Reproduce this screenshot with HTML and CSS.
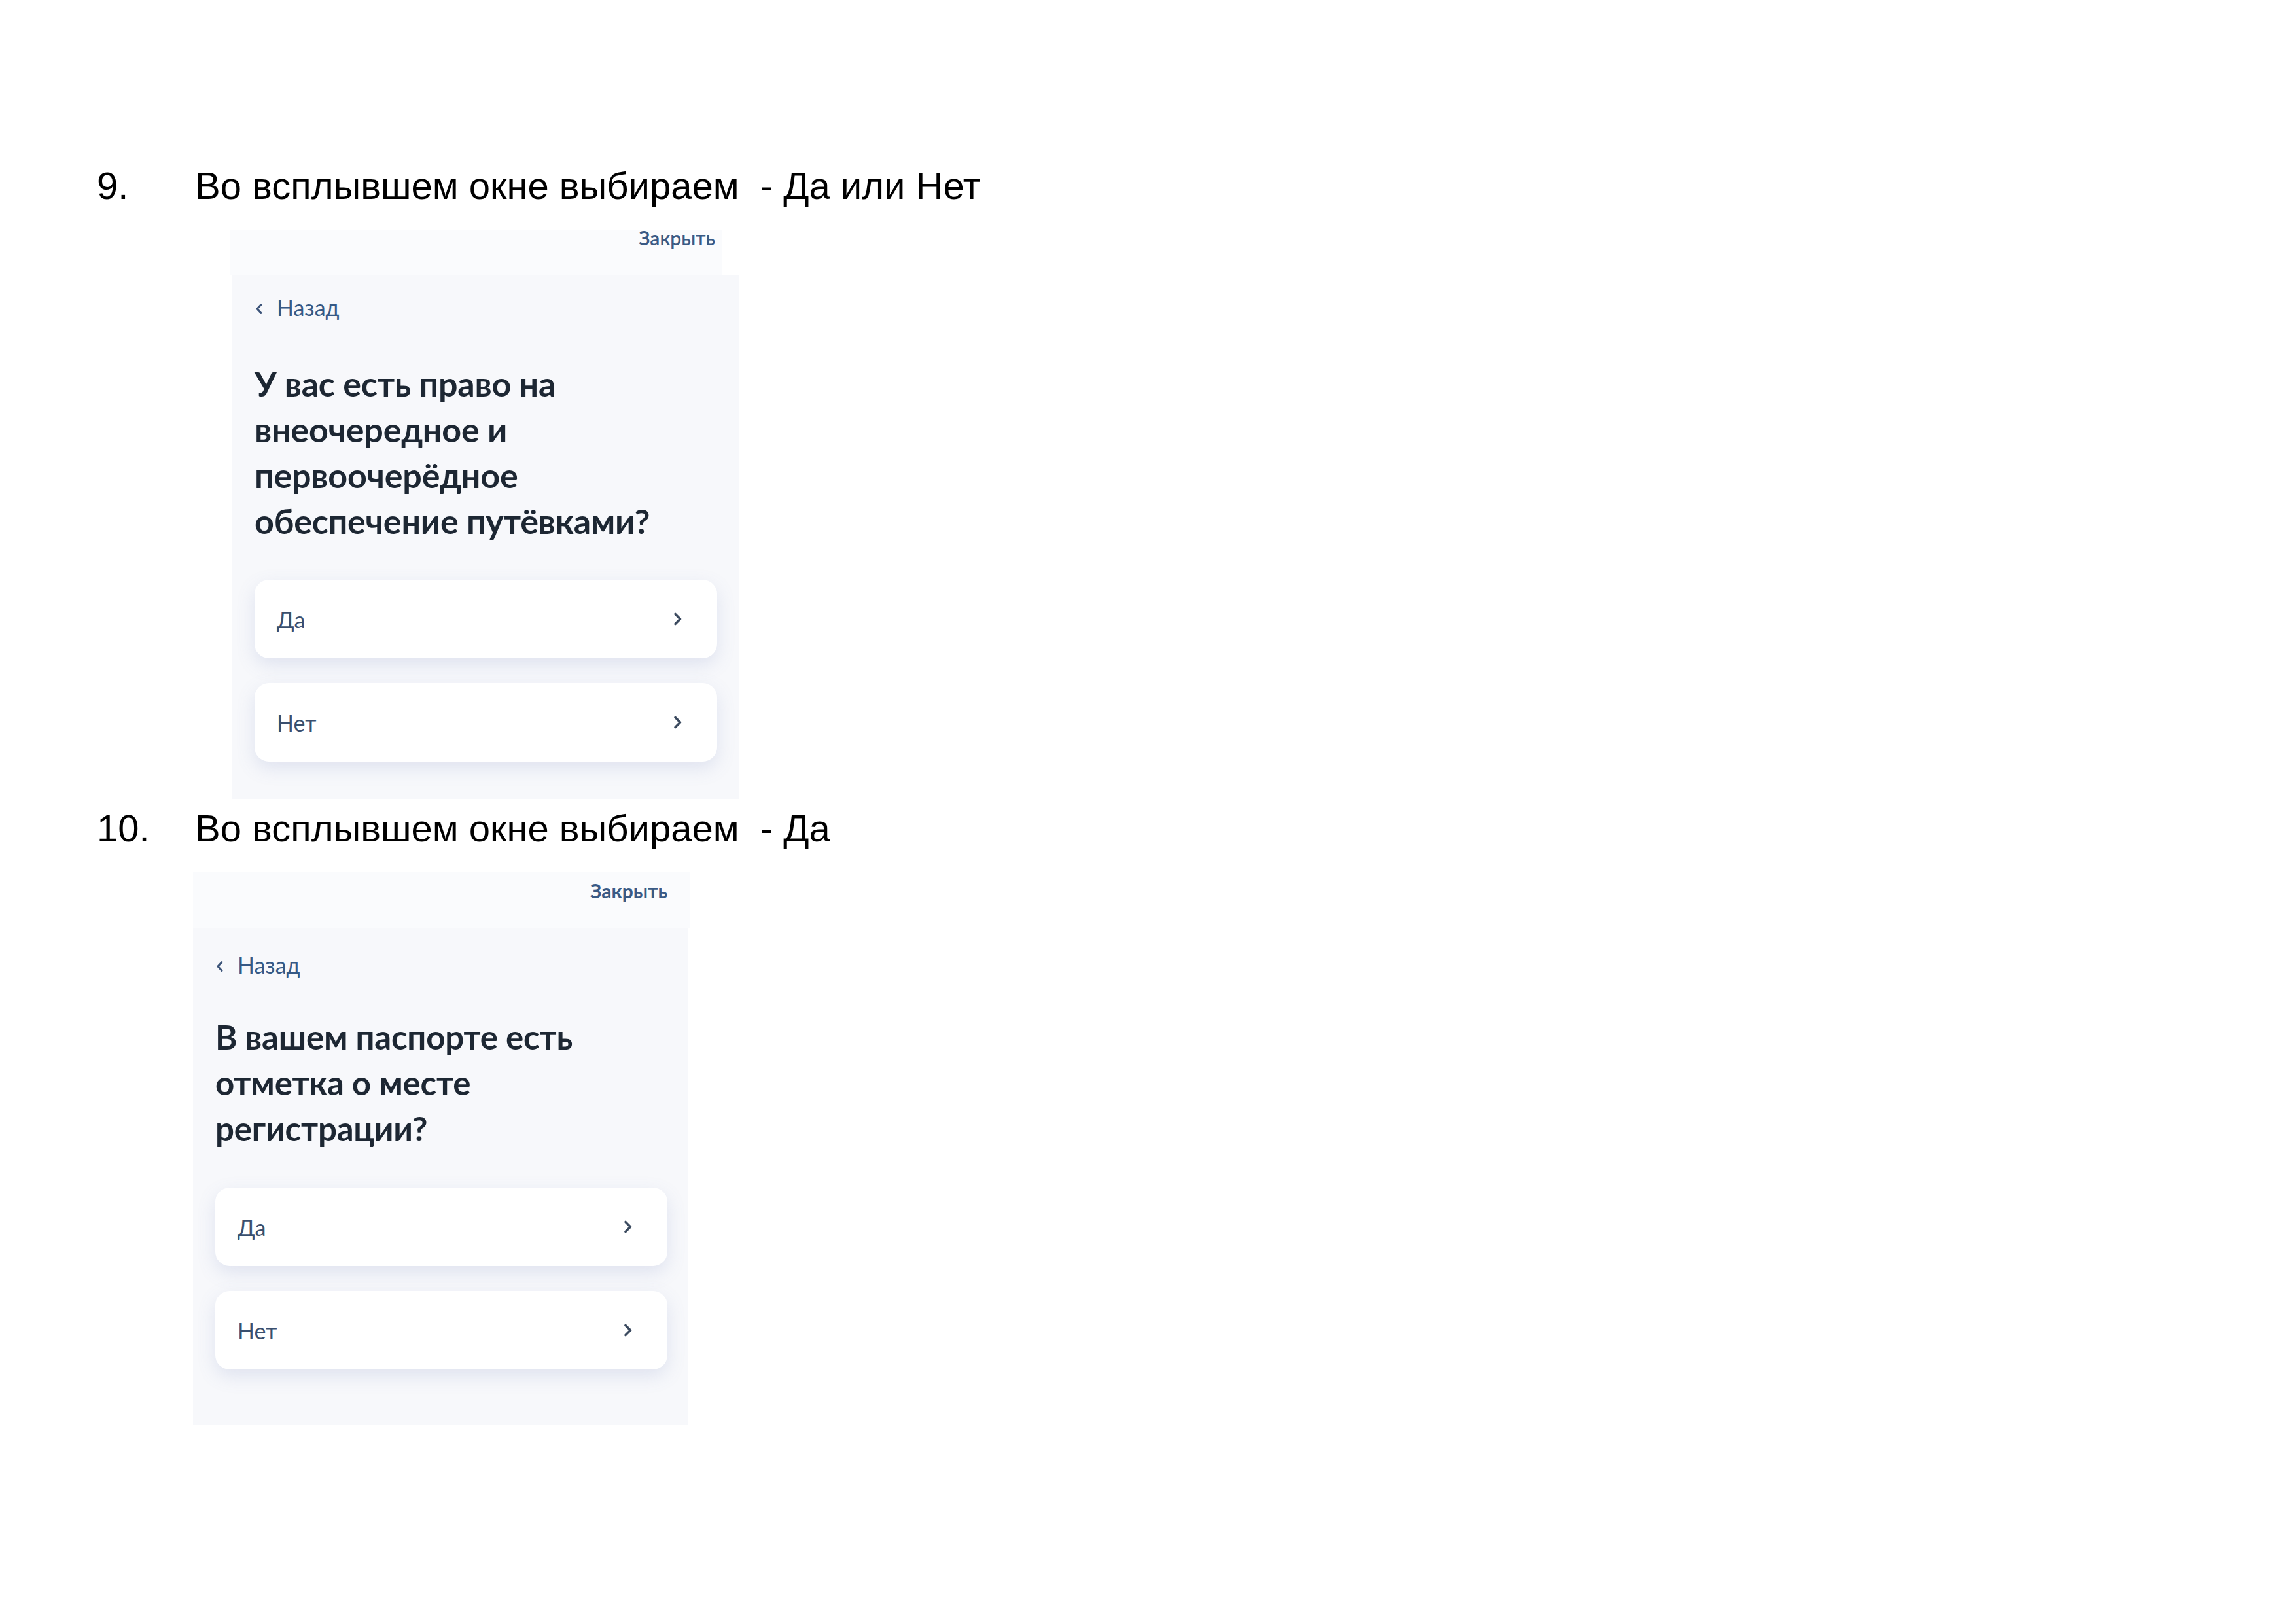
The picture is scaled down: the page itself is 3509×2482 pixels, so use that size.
FILE: index.html
```html
<!DOCTYPE html>
<html lang="ru">
<head>
<meta charset="utf-8">
<title>Инструкция</title>
<link rel="stylesheet" href="styles.css">
</head>
<body>
<div class="page">
  <section class="step step--9">
    <h2 class="step-title"><span class="step-num">9.</span><span class="step-text">Во всплывшем окне выбираем&nbsp; - Да или Нет</span></h2>
    <div class="shot shot--one">
      <div class="shot-top"><span class="close">Закрыть</span></div>
      <div class="shot-main">
        <div class="back"><svg class="back-ico" viewBox="0 0 14 20" width="14" height="20"><path d="M10 3.5 L4 10 L10 16.5" fill="none" stroke="#3c5479" stroke-width="3" stroke-linecap="round" stroke-linejoin="round"/></svg><span>Назад</span></div>
        <h3 class="question">У вас есть право на<br>внеочередное и<br>первоочерёдное<br>обеспечение путёвками?</h3>
        <div class="options">
          <div class="option"><span>Да</span><svg class="chev" viewBox="0 0 16 22" width="16" height="22"><path d="M4 3.5 L11.5 11 L4 18.5" fill="none" stroke="#3b4a5f" stroke-width="3.6" stroke-linecap="round" stroke-linejoin="round"/></svg></div>
          <div class="option"><span>Нет</span><svg class="chev" viewBox="0 0 16 22" width="16" height="22"><path d="M4 3.5 L11.5 11 L4 18.5" fill="none" stroke="#3b4a5f" stroke-width="3.6" stroke-linecap="round" stroke-linejoin="round"/></svg></div>
        </div>
      </div>
    </div>
  </section>
  <section class="step step--10">
    <h2 class="step-title"><span class="step-num">10.</span><span class="step-text">Во всплывшем окне выбираем&nbsp; - Да</span></h2>
    <div class="shot shot--two">
      <div class="shot-top"><span class="close">Закрыть</span></div>
      <div class="shot-main">
        <div class="back"><svg class="back-ico" viewBox="0 0 14 20" width="14" height="20"><path d="M10 3.5 L4 10 L10 16.5" fill="none" stroke="#3c5479" stroke-width="3" stroke-linecap="round" stroke-linejoin="round"/></svg><span>Назад</span></div>
        <h3 class="question">В вашем паспорте есть<br>отметка о месте<br>регистрации?</h3>
        <div class="options">
          <div class="option"><span>Да</span><svg class="chev" viewBox="0 0 16 22" width="16" height="22"><path d="M4 3.5 L11.5 11 L4 18.5" fill="none" stroke="#3b4a5f" stroke-width="3.6" stroke-linecap="round" stroke-linejoin="round"/></svg></div>
          <div class="option"><span>Нет</span><svg class="chev" viewBox="0 0 16 22" width="16" height="22"><path d="M4 3.5 L11.5 11 L4 18.5" fill="none" stroke="#3b4a5f" stroke-width="3.6" stroke-linecap="round" stroke-linejoin="round"/></svg></div>
        </div>
      </div>
    </div>
  </section>
</div>
</body>
</html>
```

FILE: styles.css
```css
html, body {
  margin: 0;
  padding: 0;
  background: #ffffff;
}
.page {
  width: 3509px;
  min-height: 2482px;
  box-sizing: border-box;
  padding: 250px 0 0 148px;
  font-family: "Liberation Sans", Arial, sans-serif;
}
.step-title {
  display: flex;
  margin: 0;
  font-family: "Liberation Sans", Arial, sans-serif;
  font-weight: 400;
  font-size: 58px;
  line-height: 67px;
  color: #000;
}
.step-num {
  width: 150px;
  flex: none;
}
.step--10 {
  margin-top: 11px;
}
.shot {
  font-family: Lato, "Open Sans", sans-serif;
}
.shot--one {
  margin-top: 35px;
  margin-left: 204px;
}
.shot--two {
  margin-top: 34px;
  margin-left: 147px;
}
.shot-top {
  overflow: hidden;
  background: #fafbfd;
  display: flex;
  justify-content: flex-end;
  box-sizing: border-box;
}
.shot--one .shot-top {
  width: 751px;
  height: 68px;
  padding: 0 10px 0 0;
}
.shot--one .close {
  margin-top: -7px;
  font-weight: 600;
}
.shot--two .shot-top {
  width: 760px;
  height: 86px;
  padding: 10px 35px 0 0;
}
.close {
  font-size: 30px;
  line-height: 36px;
  font-weight: 700;
  color: #3a5a85;
  display: block;
}
.shot-main {
  background: #f7f8fb;
  box-sizing: border-box;
  padding: 30px 34px 0 34px;
}
.shot--one .shot-main {
  width: 775px;
  margin-left: 3px;
  padding-bottom: 57px;
}
.shot--one .question {
  font-size: 52px;
}
.shot--two .shot-main {
  width: 757px;
  padding-top: 36px;
  padding-bottom: 85px;
  padding-right: 32px;
}
.shot--two .question {
  margin-top: 55px;
}
.back {
  display: flex;
  align-items: center;
  gap: 20px;
  font-size: 34px;
  line-height: 40px;
  color: #365985;
}
.back-ico {
  flex: none;
  margin-top: 4px;
}
.question {
  margin: 61px 0 0 0;
  font-size: 51px;
  line-height: 70px;
  font-weight: 700;
  color: #1d2733;
  letter-spacing: -0.2px;
}
.options {
  display: flex;
  flex-direction: column;
  gap: 38px;
  margin-top: 55px;
}
.option {
  height: 120px;
  box-sizing: border-box;
  background: #ffffff;
  border-radius: 22px;
  box-shadow: 0 10px 28px rgba(105, 125, 185, 0.17);
  display: flex;
  align-items: center;
  justify-content: space-between;
  padding: 0 52px 0 34px;
  font-size: 34px;
  color: #3a4f6e;
}
.chev {
  flex: none;
}
```
